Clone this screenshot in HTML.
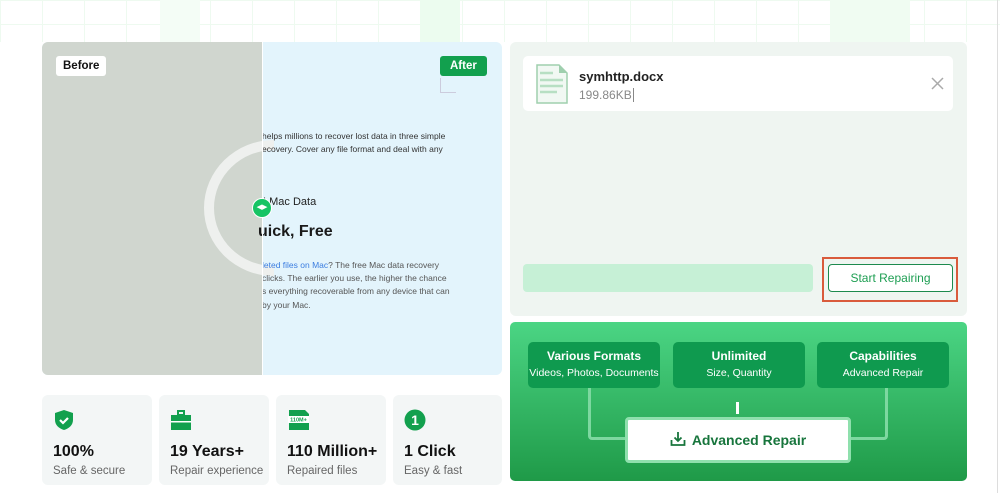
<!DOCTYPE html>
<html><head><meta charset="utf-8"><style>
*{box-sizing:border-box;margin:0;padding:0}
body{width:1000px;height:493px;background:#fff;font-family:"Liberation Sans",sans-serif;position:relative;overflow:hidden}
.a{position:absolute}
.grid{left:0;top:0;width:1000px;height:42px;background-image:linear-gradient(90deg,#eefaf0 1px,transparent 1px),linear-gradient(#eefaf0 1px,transparent 1px);background-size:42px 24px}
.card{background:#f3f6f6;border-radius:6px}
.stat b{display:block;font-size:16px;color:#111;margin-top:7px;white-space:nowrap}
.stat span{font-size:11.5px;color:#666;white-space:nowrap}
.gb{background:#0f9a4f;border-radius:5px;color:#fff;text-align:center;height:46px;padding-top:7px}
.gb b{display:block;font-size:12px}
.gb span{font-size:10.5px;white-space:nowrap}
.nw{white-space:nowrap}
</style></head><body>
<div class="a grid"></div>
<div class="a" style="left:160px;top:0;width:40px;height:42px;background:#f4fdf6"></div>
<div class="a" style="left:420px;top:0;width:40px;height:42px;background:#ecfcef"></div>
<div class="a" style="left:830px;top:0;width:80px;height:42px;background:#f0fcf2"></div>
<div class="a" style="left:997px;top:0;width:1px;height:493px;background:#ddd"></div>
<!-- left comparison -->
<div class="a" style="left:42px;top:42px;width:460px;height:333px;border-radius:6px;overflow:hidden;background:#e3f4fc">
 <div class="a" style="left:0;top:0;width:220px;height:333px;background:#d0d6cf"></div>
 <div class="a" style="left:162px;top:98px;width:140px;height:136px;border-radius:50%;border:10px solid #eef0ee;clip-path:inset(0 50% 0 0)"></div>
 <div class="a nw" style="left:220px;top:88px;font-size:8.5px;color:#333;line-height:13px">helps millions to recover lost data in three simple<br>ecovery. Cover any file format and deal with any</div>
 <div class="a nw" style="left:221px;top:154px;font-size:11px;color:#222">! Mac Data</div>
 <div class="a nw" style="left:216px;top:181px;font-size:16px;font-weight:bold;color:#1a1a1a">uick, Free</div>
 <div class="a nw" style="left:220px;top:217px;font-size:8.5px;color:#555;line-height:13.2px"><span style="color:#3b7de0">leted files on Mac</span>? The free Mac data recovery<br> clicks. The earlier you use, the higher the chance<br>s everything recoverable from any device that can<br> by your Mac.</div>
 <div class="a" style="left:14px;top:14px;background:#fff;border-radius:3px;padding:4px 7px;font-size:11.5px;font-weight:bold;color:#111">Before</div>
 <div class="a" style="left:398px;top:14px;background:#12a04e;border-radius:3px;padding:4px 10px;font-size:11.5px;font-weight:bold;color:#fff">After</div>
 <div class="a" style="left:398px;top:36px;width:16px;height:15px;border-left:1px solid #ccd;border-bottom:1px solid #ccd"></div>
 <div class="a" style="left:220px;top:0;width:1px;height:333px;background:#fff"></div>
 <div class="a" style="left:210px;top:156px;width:20px;height:20px;border-radius:50%;background:#16c464;border:1.5px solid #fff;color:#fff;font-size:7px;text-align:center;line-height:17px">◀▶</div>
</div>
<!-- stats -->
<div class="a card stat" style="left:42px;top:395px;width:110px;height:90px;padding:14px 11px">
 <svg width="22" height="22" viewBox="0 0 22 22"><path d="M11 1L20 4V11C20 16 16 19.5 11 21C6 19.5 2 16 2 11V4Z" fill="#12a04e"/><path d="M7 11l3 3 5-5" stroke="#fff" stroke-width="2.2" fill="none"/></svg>
 <b>100%</b><span>Safe &amp; secure</span></div>
<div class="a card stat" style="left:159px;top:395px;width:110px;height:90px;padding:14px 11px">
 <svg width="22" height="22" viewBox="0 0 22 22"><rect x="8" y="2" width="6" height="4" fill="none" stroke="#12a04e" stroke-width="2"/><rect x="1" y="6" width="20" height="15" fill="#12a04e"/><rect x="1" y="12" width="20" height="1.5" fill="#fff"/></svg>
 <b>19 Years+</b><span>Repair experience</span></div>
<div class="a card stat" style="left:276px;top:395px;width:110px;height:90px;padding:14px 11px">
 <svg width="24" height="22" viewBox="0 0 24 22"><path d="M2 1H18L22 5V21H2Z" fill="#12a04e"/><rect x="1" y="7" width="21" height="7" fill="#fff"/><text x="11.5" y="12.7" font-size="5.5" font-weight="bold" fill="#12a04e" text-anchor="middle" font-family="Liberation Sans">110M+</text></svg>
 <b>110 Million+</b><span>Repaired files</span></div>
<div class="a card stat" style="left:393px;top:395px;width:109px;height:90px;padding:14px 11px">
 <svg width="22" height="22" viewBox="0 0 22 22"><circle cx="11" cy="11" r="10.5" fill="#12a04e"/><text x="11" y="16" font-size="14" font-weight="bold" fill="#fff" text-anchor="middle" font-family="Liberation Sans">1</text></svg>
 <b>1 Click</b><span>Easy &amp; fast</span></div>
<!-- right top -->
<div class="a" style="left:510px;top:42px;width:457px;height:274px;background:#eff5f1;border-radius:6px"></div>
<div class="a" style="left:523px;top:56px;width:430px;height:55px;background:#fff;border-radius:5px"></div>
<svg class="a" style="left:536px;top:64px" width="32" height="40" viewBox="0 0 32 40"><path d="M1 1H23L31 9V39H1Z" fill="#f1f8f3" stroke="#9fcfae" stroke-width="1.5"/><path d="M23 1V9H31Z" fill="#9fcfae"/><path d="M4 9H17M4 16H27M4 22H27M4 28H21" stroke="#b7dfc3" stroke-width="2.5"/></svg>
<div class="a" style="left:579px;top:69px;font-size:13px;font-weight:bold;color:#222">symhttp.docx</div>
<div class="a" style="left:579px;top:88px;font-size:12px;color:#888">199.86KB<span style="border-left:1px solid #888;margin-left:1px"></span></div>
<svg class="a" style="left:931px;top:77px" width="13" height="13" viewBox="0 0 13 13"><path d="M1 1L12 12M12 1L1 12" stroke="#aaa" stroke-width="1.5"/></svg>
<div class="a" style="left:523px;top:264px;width:290px;height:28px;background:#c6f0d6;border-radius:4px"></div>
<div class="a" style="left:822px;top:257px;width:136px;height:45px;border:2px solid #d95b3c"></div>
<div class="a" style="left:828px;top:264px;width:125px;height:28px;border:1px solid #1d8a4e;border-radius:4px;background:#fff;color:#1d9e52;font-size:12px;text-align:center;line-height:26px">Start Repairing</div>
<!-- green -->
<div class="a" style="left:510px;top:322px;width:457px;height:159px;border-radius:5px;background:linear-gradient(#4bd584,#1f9a48)"></div>
<div class="a gb" style="left:528px;top:342px;width:132px"><b>Various Formats</b><span>Videos, Photos, Documents</span></div>
<div class="a gb" style="left:673px;top:342px;width:132px"><b>Unlimited</b><span>Size, Quantity</span></div>
<div class="a gb" style="left:817px;top:342px;width:132px"><b>Capabilities</b><span>Advanced Repair</span></div>
<div class="a" style="left:588px;top:388px;width:300px;height:52px;border:3px solid #7dd8a0;border-top:none;border-radius:0 0 4px 4px"></div>
<div class="a" style="left:736px;top:402px;width:3px;height:12px;background:#fff"></div>
<div class="a" style="left:625px;top:417px;width:226px;height:46px;background:#fff;border:3px solid #8fe0ad;border-radius:4px;text-align:center;line-height:40px;color:#17753c;font-size:14px;font-weight:bold">
 <svg width="16" height="16" viewBox="0 0 16 16" style="vertical-align:-2px;margin-right:6px"><path d="M8 1V10M4.5 6.5L8 10L11.5 6.5M1.5 9V14H14.5V9" stroke="#17753c" stroke-width="1.8" fill="none"/></svg>Advanced Repair</div>
</body></html>
